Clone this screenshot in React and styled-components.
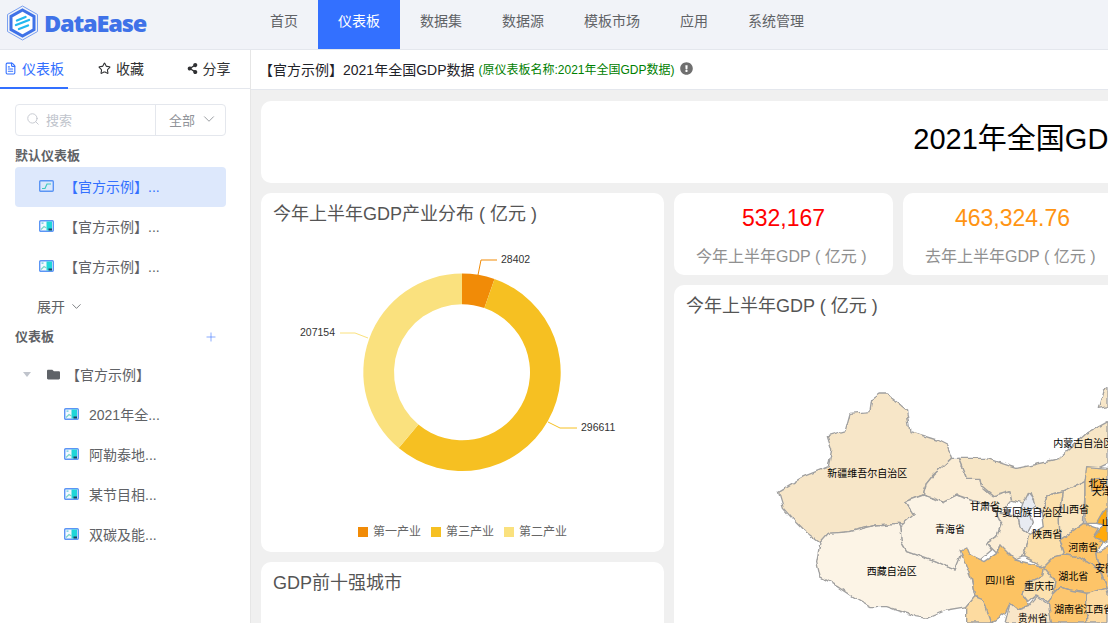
import React from "react"
import styled, { createGlobalStyle } from "styled-components"
import { FileText, Star, Search, ChevronDown, Plus } from "lucide-react"
import { FaShareAlt, FaFolder, FaExclamationCircle } from "react-icons/fa"

const FONT = `"Liberation Sans", "Noto Sans CJK SC", sans-serif`

const GlobalStyle = createGlobalStyle`
    html, body {
        margin: 0;
        height: 100%;
        overflow: hidden;
        font-family: ${FONT};
    }
    * {
        box-sizing: border-box;
    }
`

const Page = styled.div`
    width: 1108px;
    height: 623px;
    display: flex;
    flex-direction: column;
    overflow: hidden;
    background: #fff;
`

const Header = styled.header`
    height: 50px;
    flex: none;
    display: flex;
    background: #f1f3f8;
    border-bottom: 1px solid #e4e7ed;
`

const Brand = styled.div`
    width: 250px;
    display: flex;
    align-items: center;
    gap: 5px;
    padding: 0 0 3px 6px;
    font-size: 23.5px;
    font-weight: 800;
    font-family: "Open Sans", sans-serif;
    letter-spacing: -1.2px;
    color: #3f72e8;
`

const Nav = styled.nav`
    display: flex;
    height: 49px;
`

const NavItem = styled.a`
    padding: 0 20px;
    height: 49px;
    line-height: 42px;
    font-size: 14px;
    color: ${p => (p.$active ? "#fff" : "#606266")};
    background: ${p => (p.$active ? "#3370ff" : "transparent")};
`

const Body = styled.div`
    flex: 1;
    display: flex;
    min-height: 0;
`

const Sidebar = styled.aside`
    width: 251px;
    flex: none;
    border-right: 1px solid #e6e6e6;
    background: #fff;
`

const Tabs = styled.div`
    display: grid;
    grid-template-columns: 68px 106px 69px;
    height: 39px;
    border-bottom: 1px solid #e4e7ed;
`

const Tab = styled.div`
    display: flex;
    align-items: center;
    justify-content: center;
    gap: 5px;
    height: 39px;
    padding-bottom: 1px;
    font-size: 14px;
    color: ${p => (p.$active ? "#3370ff" : "#303133")};
    border-bottom: 2px solid ${p => (p.$active ? "#3370ff" : "transparent")};
`

const SideContent = styled.div`
    padding: 15px 24px 0 15px;
`

const SearchBox = styled.div`
    display: flex;
    height: 32px;
    border: 1px solid #e4e7ed;
    border-radius: 4px;
    font-size: 13px;
    color: #c0c4cc;
`

const SearchInput = styled.div`
    flex: 1;
    display: flex;
    align-items: center;
    gap: 6px;
    padding: 0 0 2px 10px;
    border-right: 1px solid #e4e7ed;
`

const SearchSelect = styled.div`
    width: 69px;
    display: flex;
    align-items: center;
    gap: 5px;
    padding: 0 0 2px 13px;
    color: #909399;
`

const GroupTitle = styled.div`
    height: 20px;
    line-height: 20px;
    font-size: 13px;
    font-weight: 700;
    color: #606266;
    margin-top: ${p => p.$top}px;
    margin-bottom: ${p => p.$bottom || 0}px;
    display: flex;
    justify-content: space-between;
    align-items: center;
    padding-right: 8px;
`

const ListRow = styled.div`
    height: 40px;
    display: flex;
    align-items: center;
    gap: 10px;
    padding-left: ${p => p.$indent}px;
    padding-bottom: 2px;
    font-size: 14px;
    border-radius: 4px;
    color: ${p => (p.$active ? "#3370ff" : "#606266")};
    background: ${p => (p.$active ? "#dde8fc" : "transparent")};
`

const Expand = styled.div`
    height: 40px;
    display: flex;
    align-items: center;
    gap: 4px;
    padding: 0 0 2px 22px;
    font-size: 14px;
    color: #606266;
`

const Caret = styled.span`
    width: 0;
    height: 0;
    margin-right: 10px;
    border-left: 4px solid transparent;
    border-right: 4px solid transparent;
    border-top: 5px solid #c0c4cc;
`

const FolderRow = styled.div`
    height: 40px;
    display: flex;
    align-items: center;
    padding: 0 0 2px 8px;
    margin-top: 8px;
    font-size: 14px;
    color: #606266;
    gap: 6px;
`

const Main = styled.main`
    flex: 1;
    min-width: 0;
    display: flex;
    flex-direction: column;
    overflow: hidden;
`

const TitleBar = styled.div`
    height: 40px;
    flex: none;
    display: flex;
    align-items: center;
    padding: 0 0 2px 8px;
    gap: 4px;
    border-bottom: 1px solid #e4e7ed;
    font-size: 14px;
    color: #1f2329;
    white-space: nowrap;
`

const OriginName = styled.span`
    font-size: 12px;
    color: green;
    margin-right: 1px;
`

const Canvas = styled.div`
    flex: 1;
    width: 1600px;
    padding: 11px 10px 0;
    background: #f0f0f0;
    display: flex;
    flex-direction: column;
    gap: 10px;
`

const Card = styled.section`
    background: #fff;
    border-radius: 10px;
    overflow: hidden;
`

const BannerCard = styled(Card)`
    height: 82px;
    width: 1577px;
    flex: none;
    display: flex;
    align-items: center;
    justify-content: center;
    padding-bottom: 12px;
    font-size: 29px;
    color: #000;
`

const Columns = styled.div`
    display: flex;
    gap: 10px;
    align-items: flex-start;
`

const LeftColumn = styled.div`
    width: 403px;
    display: flex;
    flex-direction: column;
    gap: 10px;
`

const RightColumn = styled.div`
    width: 800px;
    display: flex;
    flex-direction: column;
    gap: 10px;
`

const CardTitle = styled.h3`
    margin: 0;
    height: 40px;
    padding: 9px 13px 0 12px;
    font-size: 18px;
    line-height: 24px;
    font-weight: 400;
    color: #555;
    white-space: nowrap;
`

const PieCard = styled(Card)`
    height: 359px;
`

const CityCard = styled(Card)`
    height: 300px;
`

const Legend = styled.div`
    display: flex;
    justify-content: center;
    align-items: center;
    gap: 10px;
    margin-top: 9px;
    font-size: 12px;
    line-height: 20px;
    color: #666;
`

const LegendItem = styled.span`
    display: flex;
    align-items: center;
    gap: 5px;

    &::before {
        content: "";
        width: 10px;
        height: 10px;
        background: ${p => p.$color};
    }
`

const StatRow = styled.div`
    display: flex;
    gap: 10px;
`

const StatCard = styled(Card)`
    width: 219px;
    height: 82px;
    display: flex;
    flex-direction: column;
    align-items: center;
    padding-top: 10px;
    white-space: nowrap;
`

const StatValue = styled.div`
    font-size: 23px;
    line-height: 30px;
    color: ${p => p.$color};
`

const StatLabel = styled.div`
    margin-top: 12px;
    font-size: 16px;
    line-height: 24px;
    color: #909090;
`

const MapCard = styled(Card)`
    height: 400px;
`

const MapSvg = styled.svg`
    display: block;
    margin: 55px 0 0 96px;
    overflow: hidden;

    text {
        font-size: 30px;
        font-family: ${FONT};
        fill: #000;
        text-anchor: middle;
    }
    path {
        stroke: #a0a0a0;
        stroke-width: 4;
        stroke-linejoin: round;
    }
`

const PieSvg = styled.svg`
    display: block;

    text {
        font-size: 10.5px;
        font-family: ${FONT};
        fill: #333;
    }
    polyline {
        fill: none;
    }
`

const LogoMark = () => (
    <svg width="33" height="36" viewBox="0 0 33 36">
        <path d="M16.5 1 L31.5 9.5 V26.5 L16.5 35 L1.5 26.5 V9.5 Z" fill="none" stroke="#7aa0f0" strokeWidth="1" />
        <path d="M16.5 5 L28 11.5 V24.5 L16.5 31 L5 24.5 V11.5 Z" fill="#fff" stroke="#3f72e8" strokeWidth="3" />
        <path d="M11 15.5 L19.5 12 M10 20 L23 15 M13 24 L22 20.5" stroke="#22b8f0" strokeWidth="2.4" strokeLinecap="round" />
    </svg>
)

// small dashboard thumbnails in the tree
const BoardIcon = ({ active }) => (
    <svg width="15" height="12" viewBox="0 0 15 12">
        <rect x="0.7" y="0.7" width="13.6" height="10.6" rx="1" fill={active ? "#dce8fb" : "#f2f9ff"} stroke="#5b95f5" strokeWidth="1.4" />
        {active
            ? <path d="M3 8.5 H6 L8 4 H12" fill="none" stroke="#40c8c0" strokeWidth="1.2" />
            : <>
                <rect x="7.5" y="1.5" width="5.5" height="9" fill="#1fd6d8" />
                <rect x="9.5" y="8.5" width="3.5" height="2" fill="#1d3f66" />
                <path d="M2 9.5 L5 6.5 L7.5 8" fill="none" stroke="#7ad6c8" strokeWidth="1.2" />
                <rect x="2.5" y="2.5" width="2" height="1.2" fill="#56c8d8" />
            </>}
    </svg>
)

const polar = (cx, cy, r, deg) => {
    const a = (deg * Math.PI) / 180
    return [cx + r * Math.sin(a), cy - r * Math.cos(a)]
}

const ringPath = (cx, cy, r0, r1, from, to) => {
    const large = to - from > 180 ? 1 : 0
    const [ax, ay] = polar(cx, cy, r1, from)
    const [bx, by] = polar(cx, cy, r1, to)
    const [dx, dy] = polar(cx, cy, r0, to)
    const [ex, ey] = polar(cx, cy, r0, from)
    return `M${ax} ${ay}A${r1} ${r1} 0 ${large} 1 ${bx} ${by}L${dx} ${dy}A${r0} ${r0} 0 ${large} 0 ${ex} ${ey}Z`
}

const slices = [
    { name: "第一产业", value: 28402, color: "#f18b07" },
    { name: "第三产业", value: 296611, color: "#f6c022" },
    { name: "第二产业", value: 207154, color: "#fae17e" },
]

const total = slices.reduce((s, d) => s + d.value, 0)

const Donut = () => {
    let start = 0
    return (
        <PieSvg width="403" height="280" viewBox="0 0 403 280">
            {slices.map(s => {
                const end = start + (s.value / total) * 360
                const d = ringPath(201, 139.3, 68, 98.7, start, end)
                start = end
                return <path key={s.name} d={d} fill={s.color} />
            })}
            <polyline points="217,42 220,27 236,27" stroke="#f18b07" />
            <text x="240" y="30">28402</text>
            <polyline points="287,189 299,195 316,195" stroke="#f6c022" />
            <text x="320" y="198">296611</text>
            <polyline points="107,105 94,100 79,100" stroke="#fae17e" />
            <text x="39" y="103">207154</text>
        </PieSvg>
    )
}

const regions = [
    ["#f7e6c8", "M25 335L75 305L100 290L175 260L185 210L172 170L225 155L240 100L300 95L305 60L330 42L350 42L410 90L420 155L500 180L530 195L545 235L490 285L470 310L460 345L405 365L430 405L420 435L385 430L320 435L240 455L175 460L150 488L100 450L80 430L40 385Z"],
    ["#fcf4e6", "M150 488L175 460L240 455L320 435L385 430L390 440L395 490L410 515L495 545L555 570L570 510L590 500L605 600L615 650L590 680L530 690L470 715L440 710L380 690L350 680L300 680L265 660L205 620L150 590L140 545Z"],
    ["#fcf4e6", "M460 345L520 365L560 345L620 365L670 380L695 430L680 470L650 490L665 510L630 540L580 510L555 570L495 545L410 515L395 490L390 440L430 405L405 365Z"],
    ["#fbedd5", "M460 345L470 310L490 285L545 235L565 235L590 295L630 295L635 320L670 350L720 335L725 360L690 400L745 410L750 440L780 465L760 530L735 540L700 515L690 495L680 520L650 490L680 470L695 430L670 380L620 365L560 345L520 365Z"],
    ["#f7e6c6", "M565 235L650 235L740 265L860 240L950 160L1014 125V250L950 280L945 305L880 335L835 345L815 400L795 380L780 340L760 370L725 360L720 335L670 350L635 320L630 295L590 295Z"],
    ["#f7e6c8", "M985 85L1000 30L1014 20V80Z"],
    ["#fcc364", "M570 510L590 500L600 525L645 545L680 520L690 495L735 540L820 560L815 590L770 610L755 640L770 660L775 680L745 690L720 670L705 700L665 729L640 660L615 650L605 600Z"],
    ["#fddba0", "M590 680L615 650L640 660L665 729H590Z"],
    ["#f9e6c8", "M705 729L720 670L745 690L775 680L800 650L840 680L845 729Z"],
    ["#fde2b0", "M755 640L770 610L815 590L820 560L855 600L850 640L835 670L800 645L775 665Z"],
    ["#fce0ac", "M835 345L880 335L868 420L870 480L885 525L850 530L820 560L760 530L780 465L820 440L815 400Z"],
    ["#fbe6bf", "M880 335L945 305L945 335L940 430L870 480L868 420Z"],
    ["#fdd58a", "M950 260L1014 265V390L985 430L945 430L945 335L945 305Z"],
    ["#fdc468", "M870 480L940 430L985 445L970 470L1000 485L980 520L990 570L925 530L885 525Z"],
    ["#ffaa0b", "M1014 385L1000 395L980 430L1000 435L970 470L1000 485L1014 490Z"],
    ["#fdc468", "M820 560L850 530L885 525L925 530L990 570L1010 625L950 640L900 630L870 620L850 640L855 600Z"],
    ["#fdc66e", "M980 520L1014 500V620L1010 625L990 570Z"],
    ["#fdc66e", "M850 640L870 620L900 630L950 640V729H845L835 670Z"],
    ["#fddaa0", "M950 640L1010 625L1014 640V729H950Z"],
    ["#fbb040", "M965 300L985 295L1005 310L990 335L965 330Z"],
    ["#e8ebf2", "M775 340L790 360L795 380L780 400L790 430L775 460L750 440L745 410L760 370Z"],
]

const mapLabels = [
    ["新疆维吾尔自治区", 292, 291],
    ["内蒙古自治区", 940, 201],
    ["甘肃省", 645, 391],
    ["宁夏回族自治区", 772, 408],
    ["山西省", 912, 400],
    ["青海省", 540, 459],
    ["陕西省", 832, 473],
    ["河南省", 940, 512],
    ["西藏自治区", 365, 585],
    ["四川省", 691, 611],
    ["重庆市", 808, 629],
    ["湖北省", 910, 600],
    ["安徽省", 1020, 575],
    ["贵州省", 788, 727],
    ["湖南省", 897, 700],
    ["江西省", 985, 700],
    ["山东省", 1040, 438],
    ["北京市", 1000, 320],
    ["天津市", 1010, 345],
]

const ChinaMap = () => (
    <MapSvg width="338" height="243" viewBox="0 0 1014 729">
        <defs>
            {/* roughens the straight province edges into border-like lines */}
            <filter id="rough" x="0" y="0" width="100%" height="100%" filterUnits="userSpaceOnUse">
                <feTurbulence type="fractalNoise" baseFrequency="0.035" numOctaves="2" seed="4" />
                <feDisplacementMap in="SourceGraphic" scale="16" xChannelSelector="R" yChannelSelector="G" />
            </filter>
        </defs>
        <g filter="url(#rough)">
            {regions.map(([fill, d], i) => <path key={i} d={d} fill={fill} />)}
        </g>
        {mapLabels.map(([t, x, y]) => <text key={t} x={x} y={y}>{t}</text>)}
    </MapSvg>
)

const navItems = ["首页", "仪表板", "数据集", "数据源", "模板市场", "应用", "系统管理"]

const App = () => {
    return (
        <Page>
            <GlobalStyle />
            <Header>
                <Brand><LogoMark />DataEase</Brand>
                <Nav>
                    {navItems.map(n => <NavItem key={n} $active={n === "仪表板"}>{n}</NavItem>)}
                </Nav>
            </Header>
            <Body>
                <Sidebar>
                    <Tabs>
                        <Tab $active><FileText size={13} />仪表板</Tab>
                        <Tab><Star size={13} />收藏</Tab>
                        <Tab><FaShareAlt size={11} />分享</Tab>
                    </Tabs>
                    <SideContent>
                        <SearchBox>
                            <SearchInput><Search size={14} strokeWidth={1.5} />搜索</SearchInput>
                            <SearchSelect>全部<ChevronDown size={18} strokeWidth={1.2} /></SearchSelect>
                        </SearchBox>
                        <GroupTitle $top={10} $bottom={1}>默认仪表板</GroupTitle>
                        <ListRow $active $indent={24}><BoardIcon active />【官方示例】...</ListRow>
                        <ListRow $indent={24}><BoardIcon />【官方示例】...</ListRow>
                        <ListRow $indent={24}><BoardIcon />【官方示例】...</ListRow>
                        <Expand>展开<ChevronDown size={15} strokeWidth={1.3} /></Expand>
                        <GroupTitle $top={0}>仪表板<Plus size={14} strokeWidth={1} color="#3370ff" /></GroupTitle>
                        <FolderRow><Caret /><FaFolder size={13} color="#5f6368" />【官方示例】</FolderRow>
                        <ListRow $indent={49}><BoardIcon />2021年全...</ListRow>
                        <ListRow $indent={49}><BoardIcon />阿勒泰地...</ListRow>
                        <ListRow $indent={49}><BoardIcon />某节目相...</ListRow>
                        <ListRow $indent={49}><BoardIcon />双碳及能...</ListRow>
                    </SideContent>
                </Sidebar>
                <Main>
                    <TitleBar>
                        <span>【官方示例】2021年全国GDP数据</span>
                        <OriginName>(原仪表板名称:2021年全国GDP数据)</OriginName>
                        <FaExclamationCircle size={13} color="#6f6f6f" />
                    </TitleBar>
                    <Canvas>
                        <BannerCard>2021年全国GDP数据</BannerCard>
                        <Columns>
                            <LeftColumn>
                                <PieCard>
                                    <CardTitle>今年上半年GDP产业分布 ( 亿元 )</CardTitle>
                                    <Donut />
                                    <Legend>
                                        {slices.map(s => <LegendItem key={s.name} $color={s.color}>{s.name}</LegendItem>)}
                                    </Legend>
                                </PieCard>
                                <CityCard>
                                    <CardTitle>GDP前十强城市</CardTitle>
                                </CityCard>
                            </LeftColumn>
                            <RightColumn>
                                <StatRow>
                                    <StatCard>
                                        <StatValue $color="#ff0000">532,167</StatValue>
                                        <StatLabel>今年上半年GDP ( 亿元 )&nbsp;</StatLabel>
                                    </StatCard>
                                    <StatCard>
                                        <StatValue $color="#ff9412">463,324.76</StatValue>
                                        <StatLabel>去年上半年GDP ( 亿元 )&nbsp;</StatLabel>
                                    </StatCard>
                                </StatRow>
                                <MapCard>
                                    <CardTitle>今年上半年GDP ( 亿元 )</CardTitle>
                                    <ChinaMap />
                                </MapCard>
                            </RightColumn>
                        </Columns>
                    </Canvas>
                </Main>
            </Body>
        </Page>
    )
}

export default App
